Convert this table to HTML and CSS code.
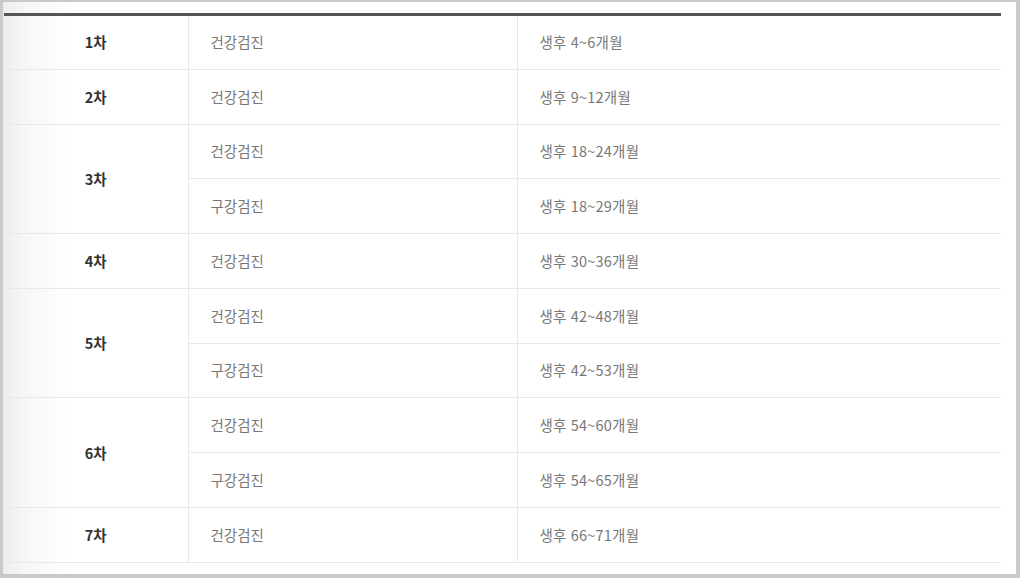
FILE: index.html
```html
<!DOCTYPE html>
<html lang="ko">
<head>
<meta charset="utf-8">
<link rel="stylesheet" href="styles.css">
</head>
<body>
<div class="frame">
  <table class="schedule">
    <colgroup>
      <col class="c1"><col class="c2"><col class="c3">
    </colgroup>
    <tbody>
      <tr><th>1차</th><td>건강검진</td><td>생후 4~6개월</td></tr>
      <tr><th>2차</th><td>건강검진</td><td>생후 9~12개월</td></tr>
      <tr><th rowspan="2">3차</th><td>건강검진</td><td>생후 18~24개월</td></tr>
      <tr><td>구강검진</td><td>생후 18~29개월</td></tr>
      <tr><th>4차</th><td>건강검진</td><td>생후 30~36개월</td></tr>
      <tr><th rowspan="2">5차</th><td>건강검진</td><td>생후 42~48개월</td></tr>
      <tr><td>구강검진</td><td>생후 42~53개월</td></tr>
      <tr><th rowspan="2">6차</th><td>건강검진</td><td>생후 54~60개월</td></tr>
      <tr><td>구강검진</td><td>생후 54~65개월</td></tr>
      <tr><th>7차</th><td>건강검진</td><td>생후 66~71개월</td></tr>
    </tbody>
  </table>
</div>
</body>
</html>
```
FILE: styles.css
```css
html, body {
  margin: 0;
  padding: 0;
  background: #ffffff;
}
.frame {
  box-sizing: border-box;
  width: 1020px;
  height: 578px;
  border-style: solid;
  border-color: #c9c9c9;
  border-width: 2px 4px 4px 3px;
  padding: 11px 0 0 1px;
  background: linear-gradient(to right, #ededed 0px, #f7f7f7 25px, #ffffff 65px);
  font-family: "Noto Sans CJK KR", "Noto Sans", sans-serif;
}
.schedule {
  width: 997px;
  border-collapse: collapse;
  table-layout: fixed;
  border-top: 3px solid #555555;
}
.c1 { width: 184px; }
.c2 { width: 329px; }
.c3 { width: 484px; }
.schedule th,
.schedule td {
  box-sizing: border-box;
  height: 54.78px;
  padding: 0 0 0 22px;
  border-bottom: 1px solid #e8e8e8;
  font-size: 14.5px;
  line-height: 20px;
  vertical-align: middle;
  text-align: left;
  color: #777777;
  font-weight: 400;
}
.schedule td {
  border-left: 1px solid #e8e8e8;
}
.schedule td + td {
  letter-spacing: 0.2px;
}
.schedule th {
  padding: 0;
  text-align: center;
  color: #333333;
  font-weight: 700;
}
```
